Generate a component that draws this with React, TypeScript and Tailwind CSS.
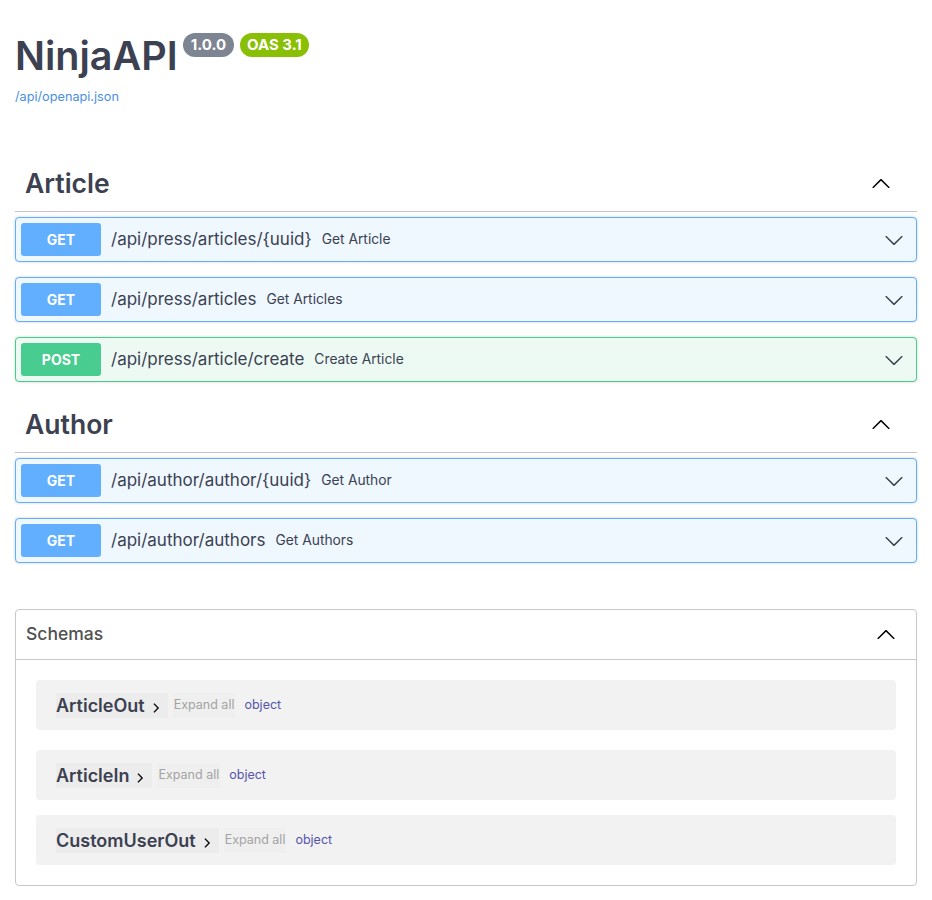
import type { ReactNode } from 'react';

const FONT = "font-['Inter','Noto_Sans','Liberation_Sans',sans-serif]";

function ArrowDown ({ className = '' }: { className?: string }) {
  return (
    <svg viewBox="0 0 20 20" width="20" height="20" className={className} fill="currentColor">
      <path d="M17.418 6.109c.272-.268.709-.268.979 0s.271.701 0 .969l-7.908 7.83c-.27.268-.707.268-.979 0l-7.908-7.83c-.27-.268-.27-.701 0-.969.271-.268.709-.268.979 0L10 13.25l7.418-7.141z" />
    </svg>
  );
}

function ArrowRight () {
  return (
    <svg viewBox="0 0 20 20" width="10" height="10" fill="currentColor" className="text-black">
      <path d="M13.25 10L6.109 2.58a.697.697 0 0 1 0-.979.68.68 0 0 1 .969 0l7.83 7.908a.697.697 0 0 1 0 .979l-7.83 7.908a.68.68 0 0 1-.969 0 .697.697 0 0 1 0-.979L13.25 10z" stroke="currentColor" strokeWidth="1.5" />
    </svg>
  );
}

type Op = { method: 'GET' | 'POST'; path: string; summary: string };

function Opblock ({ method, path, summary }: Op) {
  const isGet = method === 'GET';
  return (
    <div
      className={`mb-[15px] flex items-center rounded-[4px] border p-[5px] shadow-[0_0_3px_rgba(0,0,0,0.19)] ${
        isGet ? 'border-[#61affe] bg-[#eff7ff]' : 'border-[#49cc90] bg-[#edfaf4]'
      }`}
    >
      <span
        className={`flex h-[33px] w-20 items-center justify-center rounded-[3px] text-[14px] font-bold text-white ${
          isGet ? 'bg-[#61affe]' : 'bg-[#49cc90]'
        }`}
      >
        {method}
      </span>
      <span className="px-[10px] text-[17px] text-[#3b4151]">{path}</span>
      <span className="flex-1 text-[13.8px] text-[#3b4151]">{summary}</span>
      <ArrowDown className="mr-[7px] text-[#3b4151]" />
    </div>
  );
}

function Section ({ title, children }: { title: string; children: ReactNode }) {
  return (
    <div>
      <div className="mb-[5px] flex h-[56px] items-center border-b border-[#c4c6cb] pl-[10px] pr-[26px]">
        <h3 className="flex-1 text-[26.5px] font-semibold text-[#3b4151]">{title}</h3>
        <ArrowDown className="rotate-180 text-black" />
      </div>
      {children}
    </div>
  );
}

function SchemaRow ({ name, className = '' }: { name: string; className?: string }) {
  return (
    <div className={`flex h-[50px] items-center rounded-[4px] bg-[#f2f2f2] px-5 ${className}`}>
      <span className="flex h-[25px] items-center gap-[6px] bg-[#ececec] pr-[7px] text-[18px] font-semibold text-[#3b4151]">
        {name}
        <span className="mt-[6px]"><ArrowRight /></span>
      </span>
      <span className="ml-[5px] flex h-[25px] items-center bg-[#efefef] pl-[1px] pr-[1px] text-[12.5px] text-[#a3a3a3]">Expand all</span>
      <span className="ml-[9px] text-[12.5px] text-[#5555aa]">object</span>
    </div>
  );
}

export default function App () {
  return (
    <div className={`min-h-[900px] bg-white px-[15px] ${FONT}`}>
      <div className="pt-[32px]">
        <div className="flex items-start">
          <h2 className="text-[39.5px] leading-[48px] font-semibold text-[#3b4151]">NinjaAPI</h2>
          <span className="ml-[5px] mt-[1px] flex h-[24px] items-center rounded-full bg-[#7d8492] px-[8px] text-[15px] font-bold text-white">1.0.0</span>
          <span className="ml-[6px] mt-[1px] flex h-[24px] items-center rounded-full bg-[#89bf04] px-[7px] text-[15px] font-bold text-white">OAS 3.1</span>
        </div>
        <a className="mt-[7px] block text-[12.7px] text-[#4990e2]">/api/openapi.json</a>
      </div>

      <div className="mt-[50px]">
        <Section title="Article">
          <Opblock method="GET" path="/api/press/articles/{uuid}" summary="Get Article" />
          <Opblock method="GET" path="/api/press/articles" summary="Get Articles" />
          <Opblock method="POST" path="/api/press/article/create" summary="Create Article" />
        </Section>
        <Section title="Author">
          <Opblock method="GET" path="/api/author/author/{uuid}" summary="Get Author" />
          <Opblock method="GET" path="/api/author/authors" summary="Get Authors" />
        </Section>
      </div>

      <div className="mt-[46px] rounded-[4px] border border-[#c8c8c8]">
        <div className="flex h-[50px] items-center border-b border-[#c8c8c8] pl-[10px] pr-[20px]">
          <h4 className="flex-1 text-[17.5px] font-medium text-[#505050]">Schemas</h4>
          <ArrowDown className="rotate-180 text-black" />
        </div>
        <div className="px-5 pb-5 pt-5">
          <SchemaRow name="ArticleOut" className="mb-5" />
          <SchemaRow name="ArticleIn" className="mb-[15px]" />
          <SchemaRow name="CustomUserOut" />
        </div>
      </div>
    </div>
  );
}
